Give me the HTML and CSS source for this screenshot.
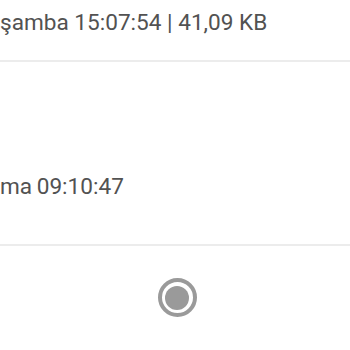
FILE: index.html
```html
<!DOCTYPE html>
<html lang="tr">
<head>
<meta charset="utf-8">
<link rel="stylesheet" href="styles.css">
</head>
<body>
<div class="list">
  <div class="item item-first"><span class="meta">şamba 15:07:54 | 41,09 KB</span></div>
  <div class="item item-second"><span class="meta meta-second">ma 09:10:47</span></div>
  <div class="footer">
    <span class="radio"><span class="radio-dot"></span></span>
  </div>
</div>
</body>
</html>
```
FILE: styles.css
```css
html, body {
  margin: 0;
  padding: 0;
  background: #ffffff;
}
.list {
  width: 350px;
  height: 350px;
  overflow: hidden;
  display: flex;
  flex-direction: column;
  font-family: Roboto, "Noto Sans", sans-serif;
  color: #525252;
}
.item {
  box-sizing: border-box;
  border-bottom: 2px solid #ececec;
}
.item-first {
  height: 62px;
  padding-top: 11px;
}
.item-second {
  height: 184px;
  padding-top: 113px;
}
.meta {
  display: block;
  font-size: 22.6px;
  line-height: 24px;
  white-space: nowrap;
}
.meta-second {
  word-spacing: -1px;
}
.footer {
  flex: 1;
  display: flex;
  justify-content: center;
  padding-top: 32px;
  padding-left: 4px;
}
.radio {
  box-sizing: border-box;
  width: 39px;
  height: 39px;
  border: 4px solid #9a9a9a;
  border-radius: 50%;
  display: flex;
  align-items: center;
  justify-content: center;
}
.radio-dot {
  width: 24px;
  height: 24px;
  border-radius: 50%;
  background: #9a9a9a;
}
```
